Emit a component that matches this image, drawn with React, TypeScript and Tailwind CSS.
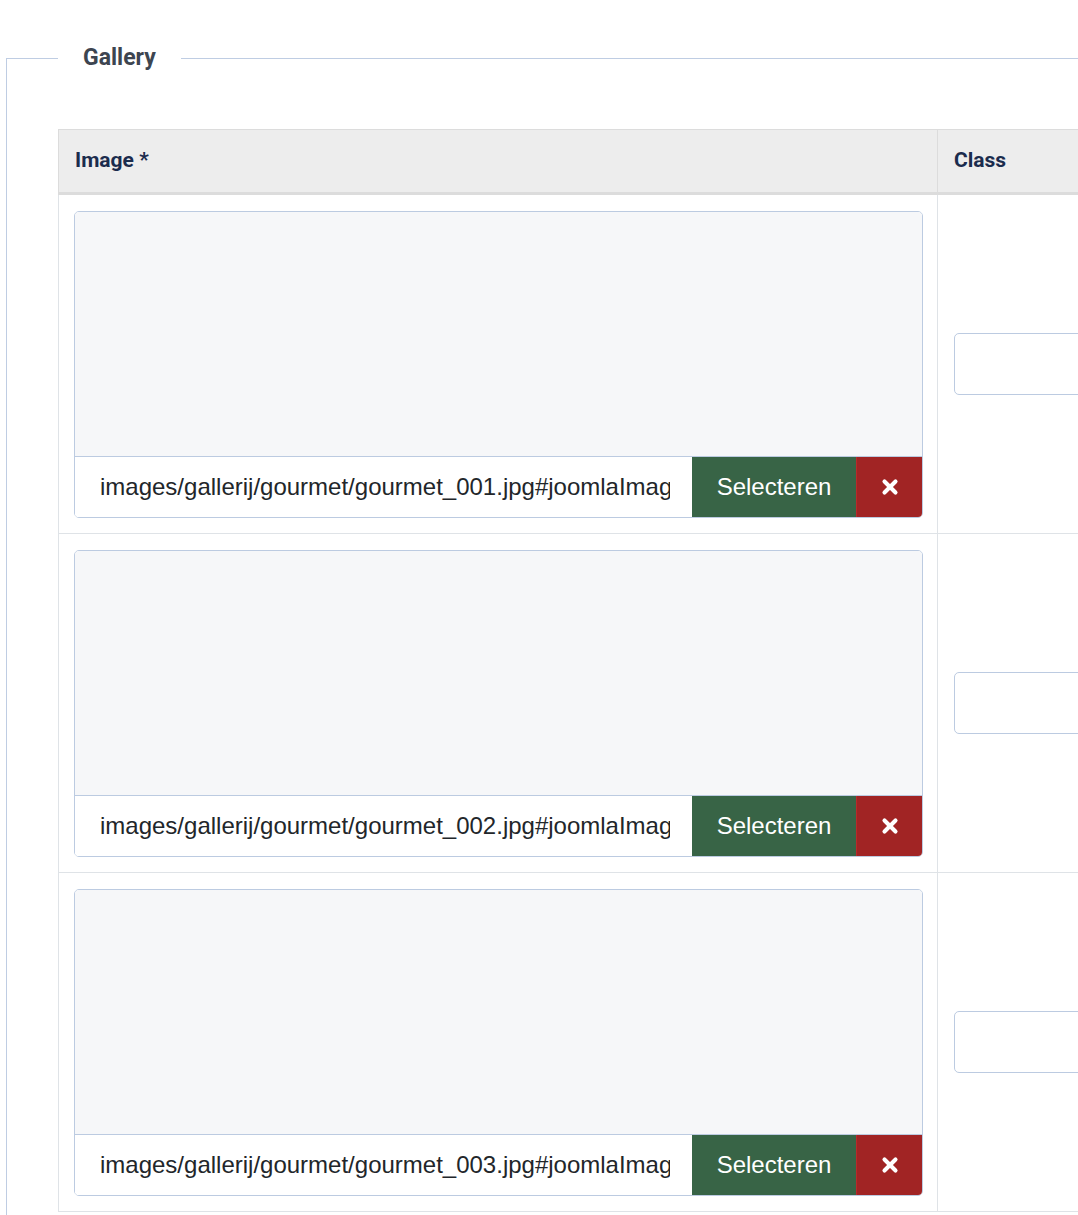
import { X } from 'lucide-react'

const rows = [
  'images/gallerij/gourmet/gourmet_001.jpg#joomlaImage://local-images/gallerij/gourmet/gourmet_001.jpg',
  'images/gallerij/gourmet/gourmet_002.jpg#joomlaImage://local-images/gallerij/gourmet/gourmet_002.jpg',
  'images/gallerij/gourmet/gourmet_003.jpg#joomlaImage://local-images/gallerij/gourmet/gourmet_003.jpg',
]

function MediaField({ value }: { value: string }) {
  return (
    <div className="rounded-[5px] border border-[#bccbe1] overflow-hidden">
      {/* preview area */}
      <div className="h-[244px] bg-[#f6f7f9]" />
      <div className="flex h-[61px] border-t border-[#bccbe1] bg-white">
        <input
          readOnly
          value={value}
          className="flex-1 min-w-0 pl-[25px] pr-[22px] text-[24px] text-[#22262a] outline-none bg-white font-['Liberation_Sans',Arial,sans-serif]"
        />
        <button className="w-[164px] shrink-0 bg-[#386446] text-white text-[24px] font-['Liberation_Sans',Arial,sans-serif]">
          Selecteren
        </button>
        <button className="w-[66px] shrink-0 bg-[#a12424] border-l border-[#b82a2a] flex items-center justify-center">
          <X className="w-[22px] h-[22px] text-white" strokeWidth={4.5} />
        </button>
      </div>
    </div>
  )
}

export default function App() {
  return (
    <div className="w-[1078px] h-[1215px] overflow-hidden bg-white font-['Roboto',sans-serif]">
      <fieldset className="ml-[6px] mt-[45px] w-[1200px] border border-[#bfcde3] pl-[51px] pt-[58px] pb-8">
        <legend className="px-[25px] text-[23px] leading-[26px] font-bold text-[#3d4550]">Gallery</legend>
        <table className="w-[1200px] border-collapse table-fixed">
          <thead>
            <tr className="bg-[#ededed]">
              <th className="w-[879px] h-[64px] border border-[#dcdcdc] border-b-[3px] px-4 text-left text-[21px] font-bold text-[#1b2c4d] align-middle">
                Image *
              </th>
              <th className="h-[64px] border border-[#dcdcdc] border-b-[3px] px-4 text-left text-[21px] font-bold text-[#1b2c4d] align-middle">
                Class
              </th>
            </tr>
          </thead>
          <tbody>
            {rows.map((r) => (
              <tr key={r} className="border-b border-[#dfe3e7]">
                <td className="border-l border-r border-[#dfe3e7] pl-[15px] pr-[14px] pt-4 pb-[15px] align-top">
                  <MediaField value={r} />
                </td>
                <td className="border-r border-[#dfe3e7] px-4 align-middle">
                  <input className="w-full h-[62px] rounded-[5px] border border-[#bccbe1] bg-white outline-none" />
                </td>
              </tr>
            ))}
          </tbody>
        </table>
      </fieldset>
    </div>
  )
}
